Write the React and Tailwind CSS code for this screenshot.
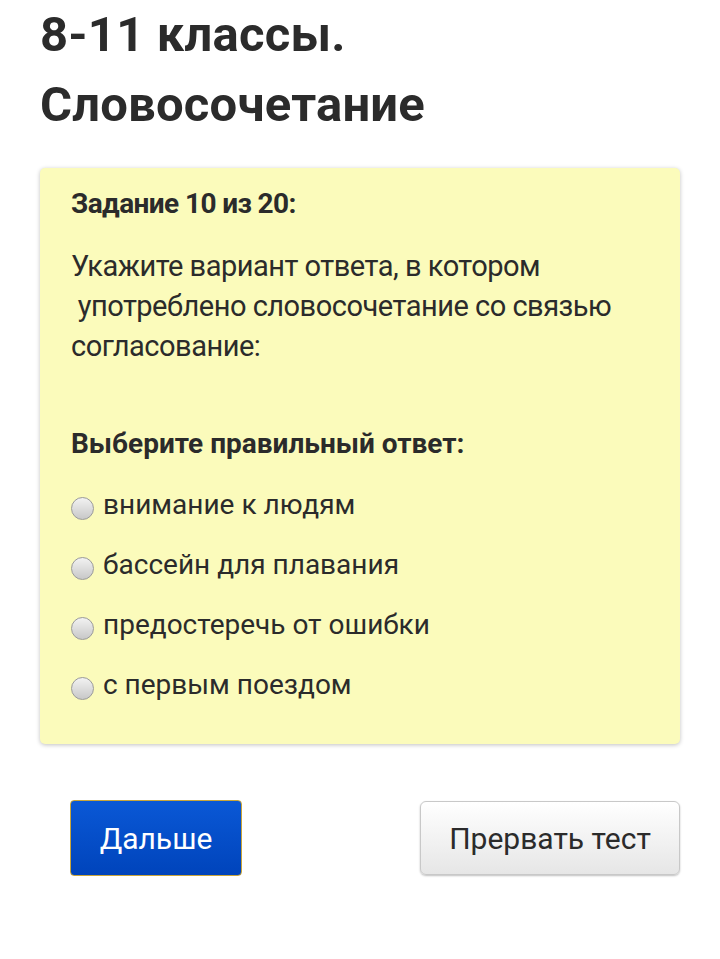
export default function App() {
  const options = [
    'внимание к людям',
    'бассейн для плавания',
    'предостеречь от ошибки',
    'с первым поездом',
  ];

  return (
    <div className="min-h-[959px] bg-white px-[40px] font-['Roboto',sans-serif] text-[#2b2b2b]">
      {/* Title */}
      <h1 className="text-[49px] font-bold leading-[70px] tracking-[0.2px]">
        8-11 классы.
        <br />
        Словосочетание
      </h1>

      {/* Question card */}
      <div className="mt-[28px] rounded-[5px] bg-[#fbfbbb] px-[31px] pt-[20px] pb-[29px] shadow-[0_1px_4px_rgba(0,0,0,0.25)]">
        <p className="text-[28px] font-bold leading-[32px] tracking-[-0.6px]">
          Задание 10 из 20:
        </p>
        <p className="mt-[26px] text-[29px] leading-[40px] tracking-[-0.5px]">
          Укажите вариант ответа, в котором
          <br />
          &nbsp;употреблено словосочетание со связью
          <br />
          согласование:
        </p>

        <p className="mt-[60px] text-[28px] font-bold leading-[36px]">
          Выберите правильный ответ:
        </p>

        <div className="mt-[13px] flex flex-col">
          {options.map((opt) => (
            <label key={opt} className="flex h-[60px] items-center">
              <span className="mt-[6px] h-[23px] w-[23px] shrink-0 rounded-full border border-[#9a9a9a] bg-[linear-gradient(#f2f2f2,#c8c8c8)]" />
              <span className="ml-[9px] text-[28px] leading-[36px]">{opt}</span>
            </label>
          ))}
        </div>
      </div>

      {/* Buttons */}
      <div className="mt-[56px] flex items-center justify-between">
        <button className="ml-[30px] flex h-[76px] w-[172px] items-center justify-center rounded-[4px] border border-[#c9a53a] bg-[linear-gradient(#0a58d6,#0044bb)] text-[30px] text-white">
          Дальше
        </button>
        <button className="flex h-[74px] w-[260px] items-center justify-center rounded-[6px] border border-[#c8c8c8] bg-[linear-gradient(#ffffff,#e6e6e6)] text-[30px] text-[#2b2b2b] shadow-[0_1px_2px_rgba(0,0,0,0.25)]">
          Прервать тест
        </button>
      </div>
    </div>
  );
}
